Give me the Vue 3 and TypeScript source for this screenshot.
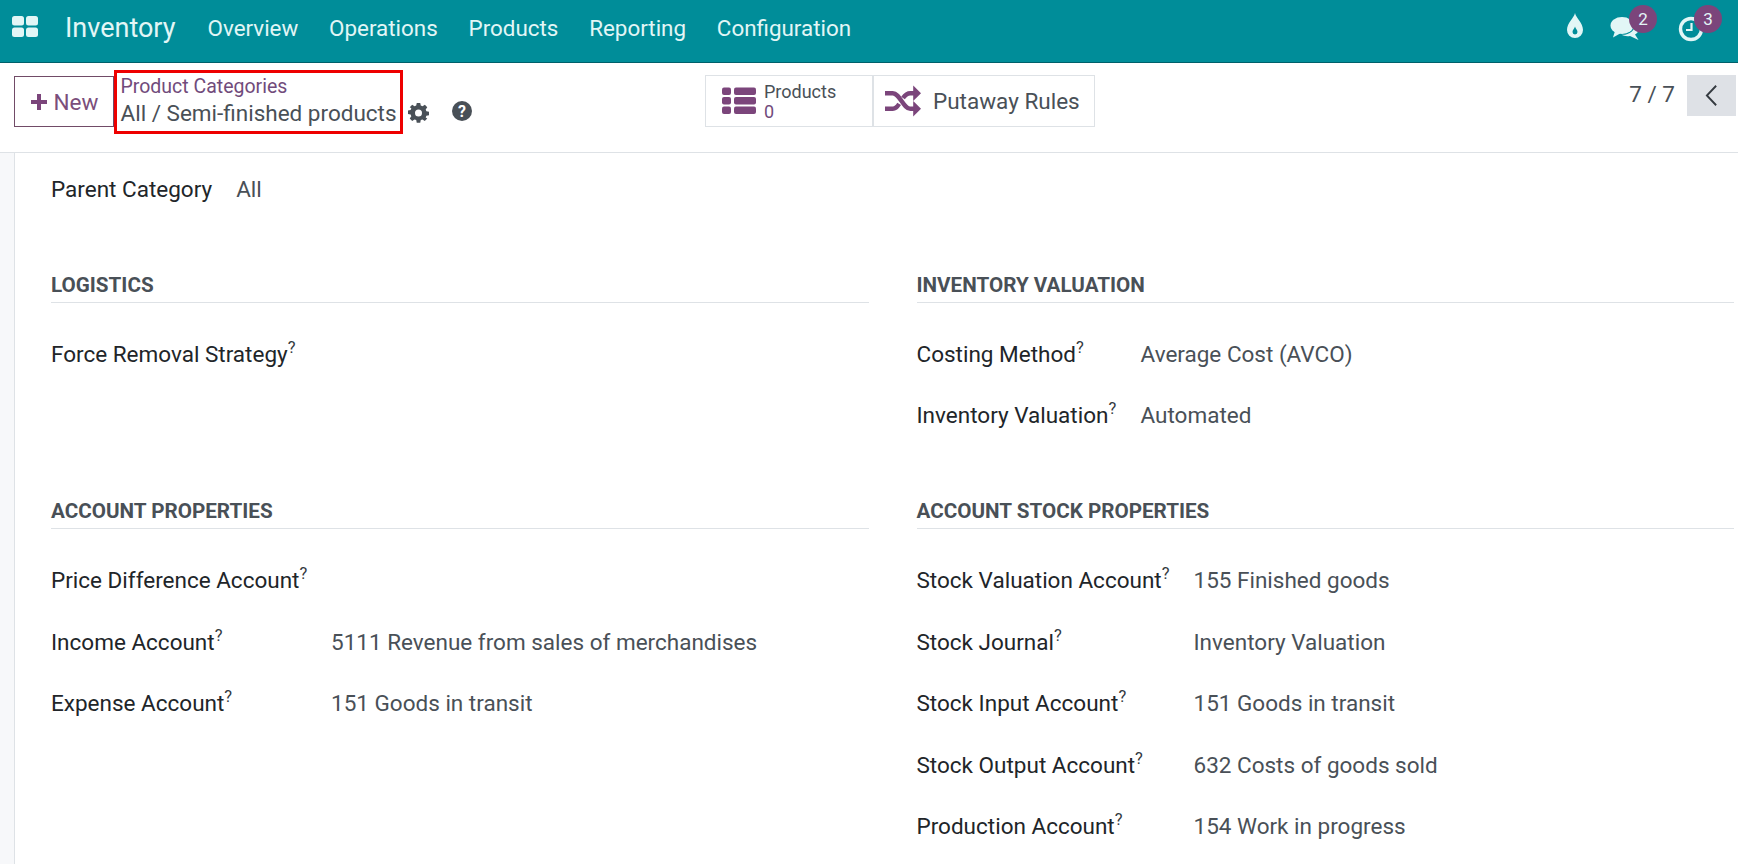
<script setup lang="ts">
const menu = ['Overview', 'Operations', 'Products', 'Reporting', 'Configuration']
const leftRows = [
  { label: 'Price Difference Account', value: '' },
  { label: 'Income Account', value: '5111 Revenue from sales of merchandises' },
  { label: 'Expense Account', value: '151 Goods in transit' },
]
const valRows = [
  { label: 'Costing Method', value: 'Average Cost (AVCO)' },
  { label: 'Inventory Valuation', value: 'Automated' },
]
const stockRows = [
  { label: 'Stock Valuation Account', value: '155 Finished goods' },
  { label: 'Stock Journal', value: 'Inventory Valuation' },
  { label: 'Stock Input Account', value: '151 Goods in transit' },
  { label: 'Stock Output Account', value: '632 Costs of goods sold' },
  { label: 'Production Account', value: '154 Work in progress' },
]
</script>

<template>
  <div class="page">
    <header class="nav">
      <svg class="apps" viewBox="0 0 26 22" width="26" height="22"><rect x="0" y="0" width="12" height="9.5" rx="2.5"/><rect x="14" y="0" width="12" height="9.5" rx="2.5"/><rect x="0" y="11.5" width="12" height="9.5" rx="2.5"/><rect x="14" y="11.5" width="12" height="9.5" rx="2.5"/></svg>
      <span class="brand">Inventory</span>
      <span v-for="m in menu" :key="m" class="menu-item">{{ m }}</span>
      <div class="spacer"></div>
      <svg class="drop" viewBox="0 0 18 26" width="18" height="26"><path d="M9 0C8 5 1 10 1 17A8 8 0 0 0 17 17C17 10 10 5 9 0Z" fill="#e2f6f6"/><path d="M9 13.500C8.500 15.500 6.500 17 6.500 19A2.500 2.500 0 0 0 11.500 19C11.500 17 9.500 15.500 9 13.500Z" fill="#008d99"/></svg>
      <div class="ico chat">
        <svg viewBox="0 0 30 25" width="30" height="25"><ellipse cx="12" cy="9.500" rx="11.500" ry="8.500" fill="#e2f6f6"/><path d="M5 15L3 21.500L11 17Z" fill="#e2f6f6"/><path d="M25 7C29 9 30 12 28.500 15C27.500 17 26 18 25 18.500L28.500 24L20 20C17 20.500 13.500 20 11.500 18.800C18 19.500 26 15 25 7Z" fill="#e2f6f6"/></svg>
        <span class="badge">2</span>
      </div>
      <div class="ico clock">
        <svg viewBox="0 0 26 26" width="26" height="26"><circle cx="13" cy="13" r="10.500" stroke="#e2f6f6" stroke-width="3.400" fill="none"/><path d="M13.500 7V14H8" stroke="#e2f6f6" stroke-width="2.200" fill="none"/></svg>
        <span class="badge">3</span>
      </div>
    </header>

    <section class="control">
      <button class="new"><svg viewBox="0 0 18 18" width="18" height="18"><path d="M7 1h4v6h6v4h-6v6H7v-6H1V7h6Z" fill="#7b457b"/></svg><span>New</span></button>
      <div class="crumbs">
        <span class="crumb-link">Product Categories</span>
        <span class="crumb-cur">All / Semi-finished products</span>
      </div>
      <svg class="gear" viewBox="0 0 24 24" width="21" height="21"><path fill="#495057" fill-rule="evenodd" d="M10 1h4l.6 3.100 2 .8L19.300 3.100 22 5.900l-1.800 2.600.8 2 3 .6v4l-3 .6-.8 2L22 18.900 19.200 21.700l-2.600-1.800-2 .8-.6 3.100h-4l-.6-3.100-2-.8-2.600 1.800L2 18.900l1.800-2.600-.8-2-3-.6v-4l3-.6.8-2L2 5.900 4.800 3.100l2.600 1.800 2-.8Zm2 7.500a4 4 0 1 0 0 8 4 4 0 0 0 0-8Z"/></svg>
      <span class="help">?</span>
      <div class="stats">
        <div class="stat stat-products">
          <svg viewBox="0 0 34 28" width="34" height="28"><g fill="#7b457b"><rect x="0" y="0.500" width="9" height="7.500" rx="2"/><rect x="12" y="0.500" width="22" height="7.500" rx="2"/><rect x="0" y="10" width="9" height="7.500" rx="2"/><rect x="12" y="10" width="22" height="7.500" rx="2"/><rect x="0" y="19.500" width="9" height="7.500" rx="2"/><rect x="12" y="19.500" width="22" height="7.500" rx="2"/></g></svg>
          <div class="stat-text"><span>Products</span><span class="stat-num">0</span></div>
        </div>
        <div class="stat stat-rules">
          <svg viewBox="0 0 37 32" width="36" height="32"><g fill="none" stroke="#7b457b" stroke-width="4.500"><path d="M0 8H8C15 8 19 24 26 24H31"/><path d="M0 24H8C11 24 13 21.500 14.500 19"/><path d="M18.500 13C20.500 10 23 8 26 8H31"/></g><path d="M29 0L37 8L29 16Z" fill="#7b457b"/><path d="M29 16L37 24L29 32Z" fill="#7b457b"/></svg>
          <span class="rules-label">Putaway Rules</span>
        </div>
      </div>
      <div class="pager">
        <span class="pager-num">7 / 7</span>
        <span class="pager-btn"><svg viewBox="0 0 14 24" width="13" height="23"><path d="M12 1.500L2 12L12 22.500" stroke="#343a40" stroke-width="2" fill="none"/></svg></span>
      </div>
    </section>

    <div class="body">
      <div class="strip"></div>
      <main class="sheet">
        <div class="parent-row"><span class="label">Parent Category</span><span class="val">All</span></div>
        <div class="groups">
          <div class="group g-logistics">
            <h3>LOGISTICS</h3>
            <div class="row"><span class="label">Force Removal Strategy<sup>?</sup></span></div>
          </div>
          <div class="group g-valuation">
            <h3>INVENTORY VALUATION</h3>
            <div v-for="r in valRows" :key="r.label" class="row"><span class="label w-val">{{ r.label }}<sup>?</sup></span><span class="val">{{ r.value }}</span></div>
          </div>
          <div class="group">
            <h3>ACCOUNT PROPERTIES</h3>
            <div v-for="r in leftRows" :key="r.label" class="row"><span class="label w-left">{{ r.label }}<sup>?</sup></span><span class="val">{{ r.value }}</span></div>
          </div>
          <div class="group">
            <h3>ACCOUNT STOCK PROPERTIES</h3>
            <div v-for="r in stockRows" :key="r.label" class="row"><span class="label w-stock">{{ r.label }}<sup>?</sup></span><span class="val">{{ r.value }}</span></div>
          </div>
        </div>
      </main>
    </div>
  </div>
</template>

<style>
html, body { margin: 0; background: #fff; overflow: hidden; }
</style>

<style scoped>
.page { width: 1738px; height: 864px; overflow: hidden; font-family: Roboto, "Noto Sans", sans-serif; color: #212529; display: flex; flex-direction: column; }
.nav { height: 63px; flex: none; background: #008d99; display: flex; align-items: center; padding: 0 0 6px 12px; color: #e2f6f6; box-sizing: border-box; border-bottom: 1px solid #00606a; position: relative; }
.apps { fill: #e2f6f6; margin-right: 27px; margin-bottom: 2px; }
.brand { font-size: 27px; margin-right: 32px; }
.menu-item { font-size: 22.400px; margin-right: 30.800px; }
.spacer { flex: 1; }
.drop { position: absolute; left: 1566px; top: 13px; }
.ico { position: absolute; display: flex; }
.chat { left: 1610px; top: 16px; }
.clock { left: 1678px; top: 16px; }
.badge { position: absolute; top: -11px; width: 28px; height: 28px; border-radius: 50%; background: #7b457b; color: #e2f6f6; font-size: 17px; display: flex; align-items: center; justify-content: center; }
.chat .badge { left: 19px; }
.clock .badge { left: 16px; }
.control { height: 90px; flex: none; display: flex; align-items: flex-start; padding: 13px 0 0 14px; box-sizing: border-box; border-bottom: 1px solid #dee2e6; position: relative; }
.new { width: 100px; height: 51px; background: #fff; border: 1px solid #714b67; color: #7b4e7b; font: 22.500px Roboto, sans-serif; padding: 0; display: flex; align-items: center; justify-content: center; gap: 6px; }
.crumbs { display: flex; flex-direction: column; border: 3px solid #e00; padding: 1px 3px 2px 3.500px; box-sizing: border-box; width: 289px; height: 64px; margin-top: -6px; white-space: nowrap; flex: none; }
.crumb-link { font-size: 19.500px; color: #714b7b; line-height: 26px; }
.crumb-cur { font-size: 22.500px; color: #495057; line-height: 27px; }
.gear { margin: 26px 0 0 5px; flex: none; }
.help { width: 20px; height: 20px; border-radius: 50%; background: #495057; color: #fff; font-size: 16px; font-weight: 700; display: flex; align-items: center; justify-content: center; margin: 25px 0 0 23px; }
.stats { position: absolute; left: 705px; top: 12px; display: flex; height: 52px; }
.stat { border: 1px solid #dee2e6; display: flex; align-items: center; box-sizing: border-box; height: 52px; }
.stat-products { width: 168px; padding-left: 16px; gap: 8px; }
.stat-rules { width: 223px; margin-left: -1px; padding-left: 11px; gap: 12px; border-left-width: 2px; }
.stat-text { display: flex; flex-direction: column; font-size: 18px; line-height: 20px; color: #495057; padding-top: 2px; }
.stat-num { color: #714b7b; }
.rules-label { font-size: 22.500px; color: #495057; }
.pager { position: absolute; right: 2px; top: 12px; display: flex; align-items: center; }
.pager-num { font-size: 22.500px; color: #495057; margin-right: 12px; padding-bottom: 4px; }
.pager-btn { width: 49px; height: 41px; background: #dee1e6; display: flex; align-items: center; justify-content: center; }
.body { flex: 1; display: flex; min-height: 0; }
.strip { width: 14px; flex: none; background: #f7f8fa; border-right: 1px solid #dee2e6; }
.sheet { flex: 1; padding: 21px 0 0 36px; box-sizing: border-box; overflow: hidden; }
.label { font-size: 22.500px; color: #212529; white-space: nowrap; }
.label sup { font-size: 16.500px; line-height: 0; color: #343a40; vertical-align: 0.55em; }
.val { font-size: 22.500px; color: #495057; }
.parent-row { display: flex; gap: 24px; line-height: 30px; }
.groups { display: grid; grid-template-columns: 818px 817px; column-gap: 47.500px; margin-top: 64px; }
.group h3 { margin: 0 0 36px; font-size: 20.650px; font-weight: 700; color: #495057; border-bottom: 1px solid #dee2e6; line-height: 34px; }
.g-logistics, .g-valuation { height: 226px; }
.row { display: flex; height: 61.500px; align-items: flex-start; }
.g-valuation .row { height: 61px; }
.row .label, .row .val { line-height: 30px; }
.w-val { width: 224px; }
.w-left { width: 280px; }
.w-stock { width: 277px; }
</style>
